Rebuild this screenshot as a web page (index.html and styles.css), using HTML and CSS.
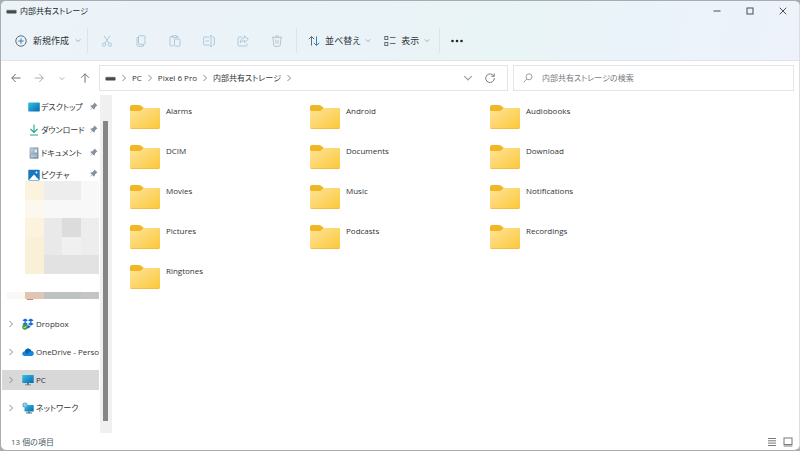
FILE: index.html
```html
<!DOCTYPE html>
<html lang="ja">
<head>
<meta charset="utf-8">
<title>内部共有ストレージ</title>
<link rel="stylesheet" href="styles.css">
</head>
<body>
<svg class="defs" aria-hidden="true">
  <defs>
    <linearGradient id="fold" x1="0" y1="0" x2="1" y2="1"><stop offset="0" stop-color="#ffe49b"/><stop offset="1" stop-color="#fbc838"/></linearGradient>
    <linearGradient id="blue" x1="0" y1="0" x2="1" y2="1"><stop offset="0" stop-color="#35c0e5"/><stop offset="1" stop-color="#0869ad"/></linearGradient>
    <linearGradient id="steel" x1="0" y1="0" x2="1" y2="1"><stop offset="0" stop-color="#b5c6d4"/><stop offset="1" stop-color="#7189a0"/></linearGradient>
  </defs>
  <symbol id="folder" viewBox="0 0 30 24"><path d="M0 2Q0 0 2 0H9Q11 0 12 1.500L14 3H28Q30 3 30 5V12H0Z" fill="#f0b626"/><path d="M0 6H9.500Q11 6 12 4.500L13.500 3H28.500Q30 3 30 4.500V22.500Q30 24 28.500 24H1.500Q0 24 0 22.500Z" fill="url(#fold)"/><path d="M1 23.600H29" stroke="#e9b63c" stroke-width=".7"/></symbol>
  <symbol id="chev-r" viewBox="0 0 6 8"><path d="M1.500 1L4.500 4L1.500 7"/></symbol>
  <symbol id="chev-d" viewBox="0 0 8 6"><path d="M1 1.500L4 4.500L7 1.500"/></symbol>
  <symbol id="pin" viewBox="0 0 9 9"><path d="M5.500 .5L8.500 3.500L7.500 4L6 5.500Q6 7 5 7.800L3.500 6L.7 8.500L3 5.500L1.200 4Q2 3 3.500 3.200L5 1.500Z" fill="#87919b"/></symbol>
  <symbol id="drive" viewBox="0 0 11 5"><rect x=".5" y="1" width="10" height="3.500" rx=".8" fill="#444b4e"/><path d="M1 1.200H10" stroke="#92999b" stroke-width=".7"/></symbol>
</svg>
<div class="window">
  <header class="top">
    <div class="titlebar">
      <svg class="drive"><use href="#drive"/></svg>
      <h1 class="title">内部共有ストレージ</h1>
      <button class="caption" aria-label="最小化"><svg viewBox="0 0 8 8"><path d="M.5 4H7.500"/></svg></button>
      <button class="caption" aria-label="最大化"><svg viewBox="0 0 8 8"><rect x="1" y="1" width="6" height="6"/></svg></button>
      <button class="caption" aria-label="閉じる"><svg viewBox="0 0 8 8"><path d="M.7 .7L7.300 7.300M7.300 .7L.7 7.300"/></svg></button>
    </div>
    <div class="commands">
      <button class="command create"><svg class="tool" viewBox="0 0 12 12"><circle cx="6" cy="6" r="5.200"/><path d="M6 3.300V8.700M3.300 6H8.700" stroke="#2b86c1"/></svg>新規作成<svg class="drop"><use href="#chev-d"/></svg></button>
      <span class="rule"></span>
      <div class="edit-tools">
        <button class="edit" aria-label="切り取り"><svg class="tool" viewBox="0 0 12 12"><path d="M3 .7L8 8.200M9 .7L4 8.200"/><circle cx="3" cy="9.600" r="1.700"/><circle cx="9" cy="9.600" r="1.700"/></svg></button>
        <button class="edit" aria-label="コピー"><svg class="tool" viewBox="0 0 12 12"><rect x="3.500" y=".8" width="6.500" height="8.500" rx="1"/><path d="M3.500 2.500H2V10Q2 11.200 3.200 11.200H8.500V9.500"/></svg></button>
        <button class="edit" aria-label="貼り付け"><svg class="tool" viewBox="0 0 12 12"><path d="M4.500 10.800H1.500Q1 10.800 1 10V2Q1 1.500 2 1.500H3.500M7.500 1.500H9V3.500M3.500 .7H7.500V2.500H3.500Z"/><rect x="5.500" y="4" width="5.500" height="7.200" rx=".8"/></svg></button>
        <button class="edit" aria-label="名前の変更"><svg class="tool" viewBox="0 0 12 12"><path d="M6.500 2H1.500Q.6 2 .6 3V9Q.6 10 1.500 10H6.500M9.500 2H10.500Q11.400 2 11.400 3V9Q11.400 10 10.500 10H9.500M8 .6V11.400M7 .6H9M7 11.400H9M2.500 6H6"/></svg></button>
        <button class="edit" aria-label="共有"><svg class="tool" viewBox="0 0 12 12"><path d="M5 2H2.200Q1 2 1 3.200V10Q1 11 2.200 11H9Q10 11 10 10V8.500M7.500 .9L11.300 4.200L7.500 7.500V5.600Q4.700 5.300 3.300 7.800Q3.700 3.300 7.500 2.900Z"/></svg></button>
        <button class="edit muted" aria-label="削除"><svg class="tool" viewBox="0 0 12 12"><path d="M.8 2.300H11.200M4.300 2.300Q4.300 .7 6 .7T7.700 2.300M2 2.300L2.800 10.300Q3 11.300 4 11.300H8Q9 11.300 9.200 10.300L10 2.300M5 4.800V8.700M7 4.800V8.700"/></svg></button>
      </div>
      <span class="rule"></span>
      <button class="command sort"><svg class="tool" viewBox="0 0 12 12"><path d="M3.500 10.500V1.500M.8 4.200L3.500 1.500L6.200 4.200"/><path d="M8.500 1.500V10.500M5.800 7.800L8.500 10.500L11.200 7.800" stroke="#2b86c1"/></svg>並べ替え<svg class="drop"><use href="#chev-d"/></svg></button>
      <button class="command view"><svg class="tool" viewBox="0 0 12 12"><rect x=".8" y="1.500" width="3" height="3"/><rect x=".8" y="7.500" width="3" height="3"/><path d="M6 2.500H11.500M6 8.500H11.500"/></svg>表示<svg class="drop"><use href="#chev-d"/></svg></button>
      <span class="rule"></span>
      <button class="more" aria-label="その他"><svg class="tool" viewBox="0 0 12 12"><circle cx="1.500" cy="6" r="1.300"/><circle cx="6" cy="6" r="1.300"/><circle cx="10.500" cy="6" r="1.300"/></svg></button>
    </div>
  </header>
  <div class="navigation">
    <div class="history">
      <button aria-label="戻る"><svg class="arrow" viewBox="0 0 10 10"><path d="M9.500 5H.8M4.700 1L.8 5L4.700 9"/></svg></button>
      <button class="off" aria-label="進む"><svg class="arrow" viewBox="0 0 10 10"><path d="M.5 5H9.200M5.300 1L9.200 5L5.300 9"/></svg></button>
      <button class="recent" aria-label="最近表示した場所"><svg class="drop"><use href="#chev-d"/></svg></button>
      <button aria-label="上へ"><svg class="arrow" viewBox="0 0 10 10"><path d="M5 9.700V.8M1 4.800L5 .8L9 4.800"/></svg></button>
    </div>
    <nav class="address" aria-label="アドレス">
      <svg class="drive"><use href="#drive"/></svg>
      <svg class="next"><use href="#chev-r"/></svg>
      <a href="#">PC</a>
      <svg class="next"><use href="#chev-r"/></svg>
      <a href="#">Pixel 6 Pro</a>
      <svg class="next"><use href="#chev-r"/></svg>
      <a href="#">内部共有ストレージ</a>
      <svg class="next"><use href="#chev-r"/></svg>
      <button class="address-list" aria-label="以前の場所"><svg viewBox="0 0 8 6"><use href="#chev-d"/></svg></button>
      <button class="reload" aria-label="更新"><svg class="arrow" viewBox="0 0 10 10"><path d="M8.800 3.200A4.300 4.300 0 1 0 9.300 5M9.200 .5V3.300H6.400"/></svg></button>
    </nav>
    <label class="search"><svg class="arrow" viewBox="0 0 10 10"><circle cx="6" cy="3.800" r="3"/><path d="M3.800 6L.7 9.300"/></svg><input type="search" aria-label="検索" placeholder="内部共有ストレージの検索"></label>
  </div>
  <div class="body">
    <aside class="sidebar">
      <div class="places">
        <div class="quick">
          <a href="#"><svg class="place" viewBox="0 0 12 12"><rect x=".2" y="1.500" width="11.600" height="9" rx=".8" fill="url(#blue)"/></svg><span>デスクトップ</span><svg class="pin"><use href="#pin"/></svg></a>
          <a href="#"><svg class="place" viewBox="0 0 12 12"><path d="M6 .5V8.500M2.500 5L6 8.500L9.500 5M2 11H10" fill="none" stroke="#25a38e" stroke-width="1.100"/></svg><span>ダウンロード</span><svg class="pin"><use href="#pin"/></svg></a>
          <a href="#"><svg class="place" viewBox="0 0 12 12"><rect x="1.500" y=".3" width="9" height="11.400" rx=".8" fill="url(#steel)"/><path d="M3 3H5.500M3 5H5.500M3 8H9M3 9.500H9" stroke="#f3f7fa" stroke-width=".5"/><rect x="6.500" y="2.500" width="2.500" height="3" fill="#e5edf3"/></svg><span>ドキュメント</span><svg class="pin"><use href="#pin"/></svg></a>
          <a href="#"><svg class="place" viewBox="0 0 12 12"><rect x=".3" y=".8" width="11.400" height="10.800" rx=".8" fill="#1977bf"/><path d="M1 11L6 5.500L11 11Z" fill="#fff"/><circle cx="8.500" cy="3.500" r="1" fill="#fff"/></svg><span>ピクチャ</span><svg class="pin"><use href="#pin"/></svg></a>
        </div>
        <div class="mosaic" aria-hidden="true">
          <i class="cream"></i><i class="g2"></i><i class="g2"></i><i class="g0"></i>
          <i class="pale"></i><i class="g0"></i><i class="g0"></i><i class="g0"></i>
          <i class="cream"></i><i class="g3"></i><i class="g5"></i><i class="g2"></i>
          <i class="warm"></i><i class="g3"></i><i class="g1"></i><i class="g2"></i>
          <i class="warm"></i><i class="g4"></i><i class="g4"></i><i class="g4"></i>
        </div>
        <div class="strip" aria-hidden="true"><i class="s0"></i><i class="s1"></i><i class="s2"></i><i class="s2"></i><i class="s3"></i></div>
        <div class="speck"></div>
        <div class="tree">
          <a href="#"><svg class="next"><use href="#chev-r"/></svg><svg class="place" viewBox="0 0 12 12"><path d="M3.200 .5L6 2.300L3.200 4.100L.4 2.300ZM8.800 .5L11.600 2.300L8.800 4.100L6 2.300ZM3.200 4.100L6 5.900L3.200 7.700L.4 5.900ZM8.800 4.100L11.600 5.900L8.800 7.700L6 5.900ZM6 6.900L8.800 8.700L6 10.500L3.200 8.700Z" fill="#1768d7"/><circle cx="3" cy="9" r="2.700" fill="#429e3a"/><path d="M1.700 9L2.700 10L4.300 8" fill="none" stroke="#fff" stroke-width=".7"/></svg><span>Dropbox</span></a>
          <a href="#"><svg class="next"><use href="#chev-r"/></svg><svg class="place" viewBox="0 0 12 12"><path d="M2.500 10Q.2 9.800 .2 7.700Q.3 5.500 2.700 5.200Q3.500 2.300 6.200 2.400Q8.500 2.500 9.300 4.800Q11.800 5 11.900 7.500Q11.800 9.900 9.500 10Z" fill="#1687d9"/><path d="M2.700 5.200Q3.500 2.300 6.200 2.400Q8.500 2.500 9.300 4.800L4.500 8Z" fill="#0a60b1"/></svg><span>OneDrive - Perso</span></a>
          <a href="#" class="selected" aria-current="page"><svg class="next"><use href="#chev-r"/></svg><svg class="place" viewBox="0 0 12 12"><rect x=".3" y="1" width="11.400" height="8" rx=".6" fill="url(#blue)"/><path d="M5 9H7V10.500H9V11.300H3V10.500H5Z" fill="#5c7e91"/></svg><span>PC</span></a>
          <a href="#"><svg class="next"><use href="#chev-r"/></svg><svg class="place" viewBox="0 0 12 12"><rect x="2.500" y="3" width="9.200" height="6.500" rx=".5" fill="url(#blue)"/><path d="M6 9.500H8V10.500H10V11.500H4V10.500H6Z" fill="#47738b"/><circle cx="3" cy="3" r="2.600" fill="#53a8cb"/><path d="M1 3H5M3 .5V5.500" stroke="#d6f1f5" stroke-width=".6"/></svg><span>ネットワーク</span></a>
        </div>
      </div>
      <div class="scrollbar"><div class="thumb"></div></div>
    </aside>
    <main class="files">
      <a href="#"><svg><use href="#folder"/></svg>Alarms</a>
      <a href="#"><svg><use href="#folder"/></svg>Android</a>
      <a href="#"><svg><use href="#folder"/></svg>Audiobooks</a>
      <a href="#"><svg><use href="#folder"/></svg>DCIM</a>
      <a href="#"><svg><use href="#folder"/></svg>Documents</a>
      <a href="#"><svg><use href="#folder"/></svg>Download</a>
      <a href="#"><svg><use href="#folder"/></svg>Movies</a>
      <a href="#"><svg><use href="#folder"/></svg>Music</a>
      <a href="#"><svg><use href="#folder"/></svg>Notifications</a>
      <a href="#"><svg><use href="#folder"/></svg>Pictures</a>
      <a href="#"><svg><use href="#folder"/></svg>Podcasts</a>
      <a href="#"><svg><use href="#folder"/></svg>Recordings</a>
      <a href="#"><svg><use href="#folder"/></svg>Ringtones</a>
    </main>
  </div>
  <footer class="status">
    <span>13 個の項目</span>
    <button aria-label="詳細表示"><svg class="arrow" viewBox="0 0 10 10"><path d="M1 1.500H9M1 3.800H9M1 6.100H9M1 8.500H9"/></svg></button>
    <button aria-label="大アイコン表示"><svg class="arrow" viewBox="0 0 10 10"><rect x="1" y="1" width="8" height="6.500"/><path d="M.6 9H9.400"/></svg></button>
  </footer>
</div>
</body>
</html>
```
FILE: styles.css
```css
* { box-sizing: border-box; }

body {
  margin: 0;
  background: #a9abac;
  color: #303436;
  font: 8px/12px "Open Sans", "Noto Sans CJK JP", sans-serif;
  font-feature-settings: "palt";
}

svg { display: block; flex: none; fill: none; stroke: currentColor; stroke-width: 1; }
.defs { position: absolute; width: 0; height: 0; }
symbol#folder, symbol#pin, symbol#drive, .place { stroke: none; }
button, input { font: inherit; font-feature-settings: inherit; color: inherit; border: 0; padding: 0; background: none; }
button { display: flex; align-items: center; justify-content: center; }
a { color: inherit; text-decoration: none; }

.window {
  min-height: 100vh;
  display: flex;
  flex-direction: column;
  border: 1px solid #aaacad;
  border-right-color: #dcdedf;
  border-radius: 6px;
  background: #fff;
  overflow: hidden;
}

.top { background: linear-gradient(100deg, #ecf3f9 0%, #eaf3f8 38%, #e9f4f6 65%, #ebf3fa 80%, #edf2fb 100%); border-bottom: 1px solid #e1e6e8; }
.titlebar { height: 20px; display: flex; align-items: center; padding-left: 5px; }
.drive { width: 11px; height: 5px; }
.title { flex: 1; margin: 0 0 0 3px; font-size: 8px; font-weight: 400; color: #202527; }
.caption { width: 33px; height: 20px; color: #4a4f52; }
.caption svg { width: 8px; height: 8px; }

.commands { height: 39px; display: flex; align-items: center; }
.command { gap: 5px; font-size: 9px; }
.create { padding: 0 6px 0 14px; gap: 6px; }
.sort { padding: 0 10px 0 11px; }
.view { padding: 0 9px 0 3px; }
.tool { width: 12px; height: 12px; color: #666c70; }
.edit .tool { color: inherit; }
.drop { width: 6px; height: 5px; color: #8c969c; }
.rule { width: 1px; height: 25px; background: #dce4e9; }
.edit-tools { display: flex; padding: 0 2px; }
.edit { width: 34px; height: 30px; color: #acc9dc; }
.muted { color: #bdc4c9; }
.more { width: 34px; height: 30px; }
.more .tool { fill: #202527; stroke: none; }

.navigation { display: flex; align-items: center; height: 34px; padding-right: 5px; }
.history { width: 98px; display: flex; align-items: center; padding-left: 10px; gap: 13px; color: #6d7376; }
.history button { width: 10px; height: 20px; }
.history .off { color: #a8adb0; }
.arrow { width: 10px; height: 10px; }
.address, .search { display: flex; align-items: center; height: 26px; border: 1px solid #e3e4e5; }
.address { flex: 395 1 0; gap: 5px; padding: 0 7px 0 5px; margin-right: 5px; }
.next { width: 6px; height: 8px; color: #858b8e; }
.address-list { margin-left: auto; color: #9ba0a2; }
.address-list svg { width: 10px; height: 8px; }
.reload { width: 20px; height: 20px; margin-left: 2px; color: #777d80; }
.search { flex: 261 1 0; padding: 0 9px; gap: 9px; color: #9ba0a2; }
.search input { flex: 1; min-width: 0; outline: 0; appearance: none; }
.search input::placeholder { color: #757a7d; opacity: 1; }

.body { flex: 1; display: flex; align-items: stretch; }
.sidebar { width: 111px; display: flex; }
.places { flex: 1; min-width: 0; }
.quick { padding-left: 27px; }
.quick a { height: 23px; display: flex; align-items: center; padding-right: 1px; }
.quick a:last-child { height: 17px; align-items: flex-start; padding-top: 5px; }
.quick span { flex: 1; margin-left: 1px; white-space: nowrap; }
.place { width: 12px; height: 12px; }
.pin { width: 9px; height: 9px; }
.mosaic { display: grid; grid-template-columns: repeat(4, 1fr); grid-template-rows: repeat(5, 1fr); height: 93px; margin: 0 0 18px 24px; }
.cream { background: #fcf3df; }
.pale { background: #fdf8ed; }
.warm { background: #f9f0d8; }
.g0 { background: #f8f8f8; }
.g1 { background: #f0f0f0; }
.g2 { background: #ededed; }
.g3 { background: #e9e9e9; }
.g4 { background: #e2e2e2; }
.g5 { background: #dcdcdc; }
.strip { display: grid; grid-template-columns: repeat(5, 1fr); height: 7px; margin-left: 6px; }
.s0 { background: #faf8f4; }
.s1 { background: #dfc5b4; }
.s2 { background: #bec2c1; }
.s3 { background: #c5c6c4; }
.speck { width: 6px; height: 1px; margin-left: 26px; background: #e07c6c; }
.tree { display: flex; flex-direction: column; gap: 8px; padding: 14px 0 0 1px; }
.tree a { height: 20px; display: flex; align-items: center; padding-left: 6px; white-space: nowrap; }
.tree .place { margin: 0 2px 0 8px; }
.tree .selected { background: #d8d8d8; }
.scrollbar { width: 12px; margin-left: 1px; background: #f0f0f0; padding: 26px 4px 12px 3px; }
.thumb { height: 100%; background: #858585; }

.files { flex: 1; display: grid; grid-template-columns: repeat(auto-fill, 180px); grid-auto-rows: 40px; align-content: start; padding: 10px 0 0 18px; }
.files a { display: flex; gap: 6px; }
.files svg { width: 30px; height: 24px; }

.status { display: flex; align-items: center; height: 17px; padding: 0 6px 0 10px; gap: 6px; color: #4c5d68; }
.status span { flex: 1; }
.status .arrow { color: #75797c; }
```
